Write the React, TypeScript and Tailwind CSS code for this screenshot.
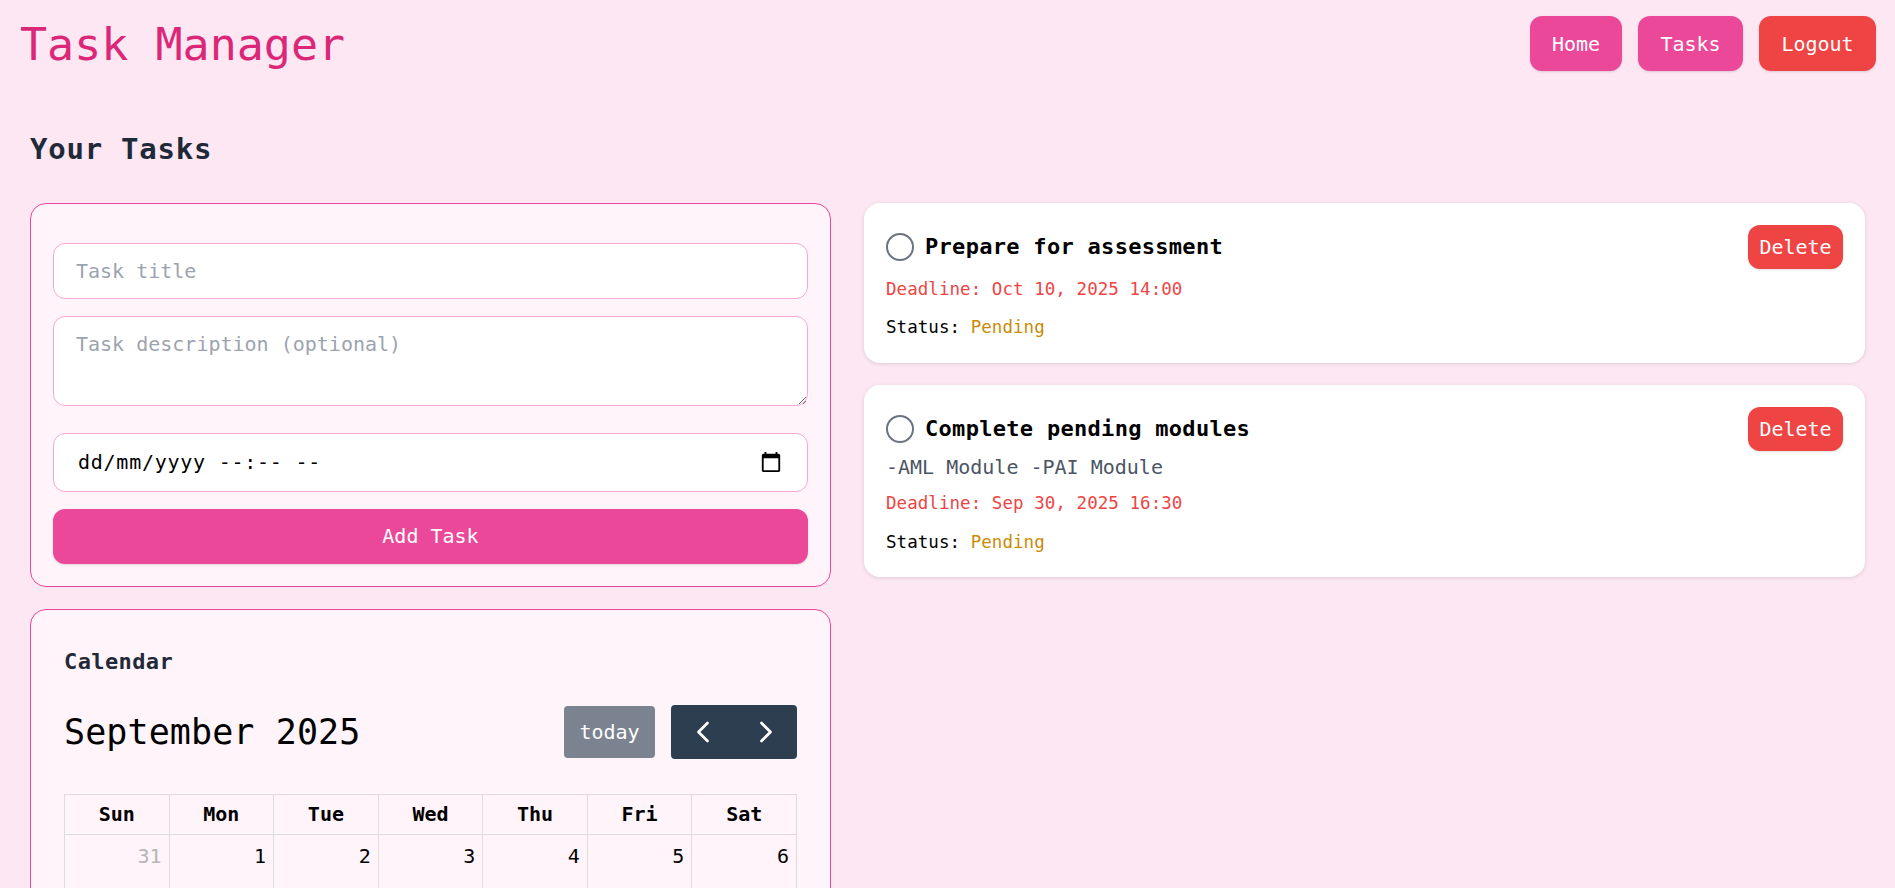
import { ChevronLeft, ChevronRight } from "lucide-react";

const tasks = [
  { id: 1, title: "Prepare for assessment", deadline: "Oct 10, 2025 14:00" },
  {
    id: 2,
    title: "Complete pending modules",
    description: "-AML Module -PAI Module",
    deadline: "Sep 30, 2025 16:30",
  },
];

const weekDays = ["Sun", "Mon", "Tue", "Wed", "Thu", "Fri", "Sat"];

const weeks = [
  [31, 1, 2, 3, 4, 5, 6],
  [7, 8, 9, 10, 11, 12, 13],
  [14, 15, 16, 17, 18, 19, 20],
  [21, 22, 23, 24, 25, 26, 27],
  [28, 29, 30, 1, 2, 3, 4],
];

function TaskCard({ task }: { task: (typeof tasks)[number] }) {
  return (
    <div
      className={`flex items-start justify-between rounded-2xl bg-white px-[22px] pt-[22px] shadow-[0_1px_4px_rgba(0,0,0,0.12)] ${
        task.description ? "pb-[23px]" : "pb-[24px]"
      }`}
    >
      <div>
        <div className="flex h-[44px] items-center gap-[11px]">
          <span className="h-[28px] w-[28px] rounded-full border-2 border-[#6b7280]" />
          <h3 className="pb-[2px] text-[22px] font-bold tracking-[0.3px] text-black">
            {task.title}
          </h3>
        </div>
        {task.description && (
          <p className="mt-[2px] text-[20px] leading-[28px] text-[#4b5563]">
            {task.description}
          </p>
        )}
        <p
          className={`${task.description ? "mt-[10px]" : "mt-[8px]"} text-[17.5px] leading-[24px] tracking-[0.05px] text-[#ef4444]`}
        >
          Deadline: {task.deadline}
        </p>
        <p
          className={`${task.description ? "mt-[15px]" : "mt-[14px]"} text-[17.5px] leading-[24px] tracking-[0.05px] text-black`}
        >
          Status: <span className="text-[#ca8a04]">Pending</span>
        </p>
      </div>
      <button className="h-[44px] w-[95px] rounded-xl bg-[#ef4444] pb-[1px] text-[20px] text-white shadow-sm">
        Delete
      </button>
    </div>
  );
}

function Calendar() {
  return (
    <div className="mt-[22px] rounded-2xl border border-[#ec4899] bg-[#fff4fa] px-[33px] pt-[37px] pb-[34px]">
      <h3 className="text-[22px] leading-[30px] font-bold tracking-[0.4px] text-[#1f2937]">
        Calendar
      </h3>
      <div className="mt-[28px] flex items-center justify-between">
        <h2 className="text-[35px] leading-[54px] tracking-[0.1px] text-black">September 2025</h2>
        <div className="flex items-center gap-4">
          <button className="h-[52px] w-[91px] rounded bg-[#7b8390] text-[20px] text-white">
            today
          </button>
          <div className="flex h-[54px] w-[126px] rounded bg-[#2c3e50] text-white">
            <button className="flex flex-1 items-center justify-center">
              <ChevronLeft size={36} strokeWidth={1.8} />
            </button>
            <button className="flex flex-1 items-center justify-center">
              <ChevronRight size={36} strokeWidth={1.8} />
            </button>
          </div>
        </div>
      </div>
      <table className="mt-[35px] w-full table-fixed border-collapse text-[20px] text-black">
        <thead>
          <tr>
            {weekDays.map((day) => (
              <th key={day} className="h-[40px] border border-[#ddd] pb-[2px] font-bold">
                {day}
              </th>
            ))}
          </tr>
        </thead>
        <tbody>
          {weeks.map((week, i) => (
            <tr key={i}>
              {week.map((date, j) => {
                const isOtherMonth = (i === 0 && date > 7) || (i === 4 && date < 7);
                return (
                  <td
                    key={j}
                    className={`h-[110px] border border-[#ddd] px-[7px] pt-[9px] text-right align-top leading-[24px] ${
                      isOtherMonth ? "text-[#b5b5b5]" : ""
                    }`}
                  >
                    {date}
                  </td>
                );
              })}
            </tr>
          ))}
        </tbody>
      </table>
    </div>
  );
}

export default function App() {
  return (
    <div className="min-h-screen bg-[#fce7f3] font-['DejaVu_Sans_Mono',monospace]">
      <header className="flex items-center justify-between py-4 pr-[19px] pl-[20px]">
        <h1 className="pt-[2px] text-[45px] leading-[53px] text-[#db2777]">
          Task Manager
        </h1>
        <nav className="flex gap-4 text-[20px] text-white">
          <button className="h-[55px] w-[92px] rounded-xl bg-[#ec4899] shadow-sm">Home</button>
          <button className="h-[55px] w-[105px] rounded-xl bg-[#ec4899] shadow-sm">Tasks</button>
          <button className="h-[55px] w-[117px] rounded-xl bg-[#ef4444] shadow-sm">Logout</button>
        </nav>
      </header>

      <main className="px-[30px] pt-[44px]">
        <h2 className="text-[29px] leading-[36px] font-bold tracking-[0.75px] text-[#1f2937]">
          Your Tasks
        </h2>

        <div className="mt-[36px] grid grid-cols-[801px_1001px] gap-[33px]">
          <div>
            <form className="flex flex-col rounded-2xl border border-[#ec4899] bg-[#fff4fa] px-[22px] pt-[39px] pb-[22px]">
              <input
                placeholder="Task title"
                className="h-[56px] rounded-xl border border-[#f9a8d4] bg-white px-[22px] text-[20px] placeholder:text-[#9ca3af]"
              />
              <textarea
                placeholder="Task description (optional)"
                className="mt-[17px] h-[90px] rounded-xl border border-[#f9a8d4] bg-white px-[22px] py-[12px] text-[20px] placeholder:text-[#9ca3af]"
              />
              <div className="mt-[27px] flex h-[59px] items-center justify-between rounded-xl border border-[#f9a8d4] bg-white pr-[25px] pb-[2px] pl-[24px] text-[20px] tracking-[0.75px] text-black">
                <span>dd/mm/yyyy --:-- --</span>
                <svg width="22" height="22" viewBox="0 0 24 24" fill="currentColor">
                  <path d="M20 3h-1V1h-2v2H7V1H5v2H4c-1.1 0-2 .9-2 2v16c0 1.1.9 2 2 2h16c1.1 0 2-.9 2-2V5c0-1.1-.9-2-2-2zm0 18H4V8h16v13z" />
                </svg>
              </div>
              <button
                type="button"
                className="mt-[17px] h-[55px] rounded-xl bg-[#ec4899] pb-[2px] text-[20px] text-white shadow-sm"
              >
                Add Task
              </button>
            </form>
            <Calendar />
          </div>

          <div className="flex flex-col gap-[22px] self-start">
            {tasks.map((task) => (
              <TaskCard key={task.id} task={task} />
            ))}
          </div>
        </div>
      </main>
    </div>
  );
}
